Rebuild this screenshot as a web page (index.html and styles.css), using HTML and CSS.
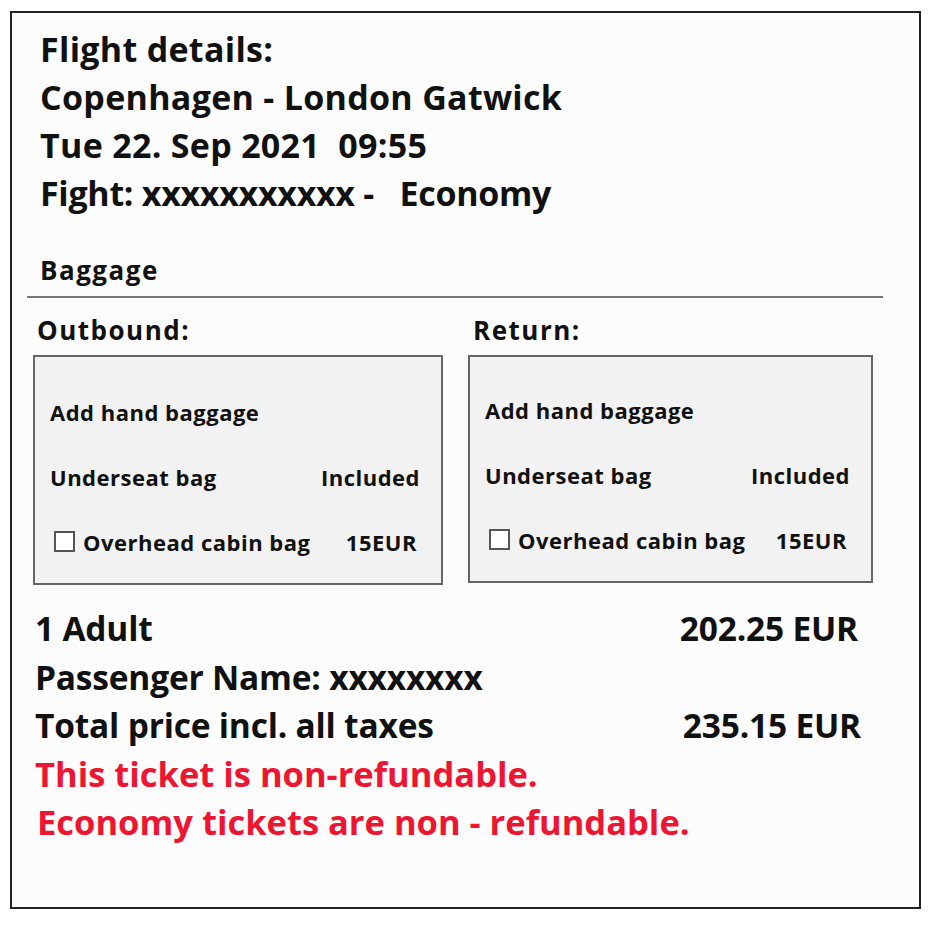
FILE: index.html
```html
<!DOCTYPE html>
<html lang="en">
<head>
  <meta charset="UTF-8">
  <title>Flight details</title>
  <link rel="stylesheet" href="styles.css">
</head>
<body>

  <!-- Ticket summary -->
  <section class="ticket">
    <div class="flight-info">
      <div>Flight details:</div>
      <div>Copenhagen - London Gatwick</div>
      <div>Tue 22. Sep 2021&nbsp; 09:55</div>
      <div class="flight-no">Fight: xxxxxxxxxxx -&nbsp;&nbsp; Economy</div>
    </div>

    <h2 class="baggage-title">Baggage</h2>
    <hr class="divider">

    <div class="baggage-grid">
      <div class="leg">
        <h3>Outbound:</h3>
        <div class="bag-box">
          <div class="bag-row">Add hand baggage</div>
          <div class="bag-row"><span>Underseat bag</span><span>Included</span></div>
          <div class="bag-row">
            <label class="check"><span class="box"></span>Overhead cabin bag</label>
            <span class="fee">15EUR</span>
          </div>
        </div>
      </div>
      <div class="leg leg-return">
        <h3>Return:</h3>
        <div class="bag-box">
          <div class="bag-row">Add hand baggage</div>
          <div class="bag-row"><span>Underseat bag</span><span>Included</span></div>
          <div class="bag-row">
            <label class="check"><span class="box"></span>Overhead cabin bag</label>
            <span class="fee">15EUR</span>
          </div>
        </div>
      </div>
    </div>

    <div class="summary">
      <div class="sum-row"><span>1 Adult</span><span>202.25 EUR</span></div>
      <div class="sum-row"><span>Passenger Name: xxxxxxxx</span></div>
      <div class="sum-row"><span>Total price incl. all taxes</span><span class="total">235.15 EUR</span></div>
      <div class="warning">This ticket is non-refundable.</div>
      <div class="warning second">Economy tickets are non - refundable.</div>
    </div>
  </section>

</body>
</html>
```

FILE: styles.css
```css
body {
  margin: 0;
  background: #fff;
  font-family: "Open Sans", Arial, sans-serif;
  color: #111;
}

.ticket {
  margin: 11px 0 0 10px;
  width: 875px;
  height: 894px;
  border: 2px solid #222;
  background: #fcfcfc;
  padding: 0 17px 0 15px;
}

.flight-info {
  padding: 12px 0 0 13px;
  font-size: 34px;
  font-weight: 700;
  line-height: 48px;
  letter-spacing: 0.3px;
}

.flight-no {
  letter-spacing: -0.3px;
}

.baggage-title {
  margin: 38px 0 0 13px;
  font-size: 26px;
  font-weight: 700;
  line-height: 30px;
  letter-spacing: 1.5px;
}

.divider {
  margin: 11px 0 0;
  width: 856px;
  border: none;
  border-top: 2px solid #777;
}

.baggage-grid {
  display: grid;
  grid-template-columns: 410px 405px;
  column-gap: 25px;
  margin: 17px 0 0 6px;
}

.leg h3 {
  margin: 0 0 10px 4px;
  font-size: 26px;
  font-weight: 700;
  line-height: 30px;
  letter-spacing: 1.5px;
}

.leg-return h3 {
  margin-left: 5px;
}

.bag-box {
  box-sizing: border-box;
  height: 230px;
  border: 2px solid #666;
  background: #f2f2f2;
  padding: 22px 21px 0 15px;
  font-size: 22px;
  font-weight: 700;
  letter-spacing: 0.5px;
}

.leg-return .bag-box {
  height: 228px;
  padding-top: 20px;
}

.bag-row {
  display: flex;
  justify-content: space-between;
  align-items: center;
  height: 65px;
}

.check {
  display: flex;
  align-items: center;
  gap: 8px;
  margin-left: 4px;
}

.check .box {
  width: 17px;
  height: 17px;
  border: 2px solid #555;
  background: #fff;
}

.fee {
  margin-right: 3px;
}

.summary {
  margin: 19px 0 0 8px;
  width: 823px;
  font-size: 33.5px;
  font-weight: 700;
  line-height: 48.5px;
  letter-spacing: -0.2px;
}

.sum-row {
  display: flex;
  justify-content: space-between;
}

.total {
  margin-right: -3px;
}

.warning {
  color: #ee1530;
  font-size: 34.5px;
  letter-spacing: 0;
}

.warning.second {
  margin-left: 2px;
}
```
